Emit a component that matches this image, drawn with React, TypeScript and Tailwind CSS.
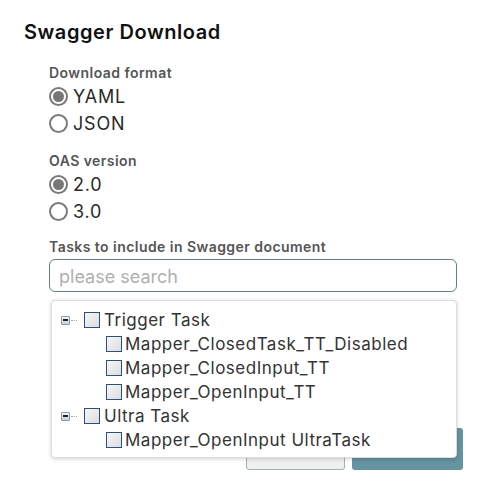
import React from "react";

const Radio = ({ checked, label }: { checked?: boolean; label: string }) => (
  <div className="flex h-[27px] items-center">
    <span className="flex h-[19px] w-[19px] items-center justify-center rounded-full border-2 border-[#7a7a7a] bg-white">
      {checked && <span className="h-[11px] w-[11px] rounded-full bg-[#777]" />}
    </span>
    <span className="ml-[5px] text-[18px] leading-none tracking-[0.8px] text-[#2a2a2a]">{label}</span>
  </div>
);

const Box = () => (
  <span className="block h-[16px] w-[16px] border-[1.5px] border-[#27527c] bg-gradient-to-br from-[#f7f7f7] to-[#dcdcdc]" />
);

const Expander = () => (
  <span className="flex items-center">
    <span className="flex h-[9px] w-[9px] items-center justify-center rounded-[1px] border border-[#8c9aa8] bg-gradient-to-b from-[#f4f6f8] to-[#c9d2da]">
      <span className="h-[1.5px] w-[5px] bg-[#222]" />
    </span>
    <span className="ml-[1px] w-[6px] border-t border-dotted border-[#aaa]" />
  </span>
);

const Parent = ({ label }: { label: string }) => (
  <div className="flex h-[24px] items-center pl-[9px]">
    <Expander />
    <span className="ml-[7px]"><Box /></span>
    <span className="ml-[4px] text-[17px] leading-none tracking-[0.5px] text-[#333]">{label}</span>
  </div>
);

const Child = ({ label }: { label: string }) => (
  <div className="flex h-[24px] items-center pl-[54px]">
    <Box />
    <span className="ml-[3px] text-[17px] leading-none tracking-[0.5px] text-[#333]">{label}</span>
  </div>
);

export default function App() {
  return (
    <div
      className="relative h-[492px] w-[492px] overflow-hidden bg-white"
      style={{ fontFamily: "Inter, 'Noto Sans', sans-serif" }}
    >
      <div className="pl-[24px] pt-[18px]">
        <h1 className="text-[20px] font-semibold leading-[28px] tracking-[0.55px] text-[#111]">Swagger Download</h1>
        <div className="mt-[17px] pl-[25px] pr-[35px]">
          <div className="text-[14px] font-semibold leading-[20px] tracking-[0.45px] text-[#555]">Download format</div>
          <Radio checked label="YAML" />
          <Radio label="JSON" />
          <div className="mt-[14px] text-[14px] font-semibold leading-[20px] tracking-[0.45px] text-[#555]">OAS version</div>
          <Radio checked label="2.0" />
          <Radio label="3.0" />
          <div className="mt-[12px] text-[14px] font-semibold leading-[20px] tracking-[0.45px] text-[#555]">Tasks to include in Swagger document</div>
          <div className="mt-[2px] flex h-[33px] items-center rounded-[6px] border border-[#5f7d8c] px-[9px] pt-[2px] text-[18px] text-[#b0b0b0]">
            please search
          </div>
        </div>
        <div className="mt-[136px] flex justify-end gap-[7px] pr-[29px]">
          <div className="h-[42px] w-[99px] rounded-[3px] border border-[#9fb0bd] bg-[#f0f0f0]" />
          <div className="h-[42px] w-[111px] rounded-[3px] bg-[#6493a1]" />
        </div>
      </div>

      <div className="absolute left-[51px] top-[300px] h-[158px] w-[406px] rounded-[4px] border border-[#dcdcdc] bg-white pt-[7px] shadow-[0_1px_4px_rgba(0,0,0,0.18)]">
        <Parent label="Trigger Task" />
        <Child label="Mapper_ClosedTask_TT_Disabled" />
        <Child label="Mapper_ClosedInput_TT" />
        <Child label="Mapper_OpenInput_TT" />
        <Parent label="Ultra Task" />
        <Child label="Mapper_OpenInput UltraTask" />
      </div>
    </div>
  );
}
